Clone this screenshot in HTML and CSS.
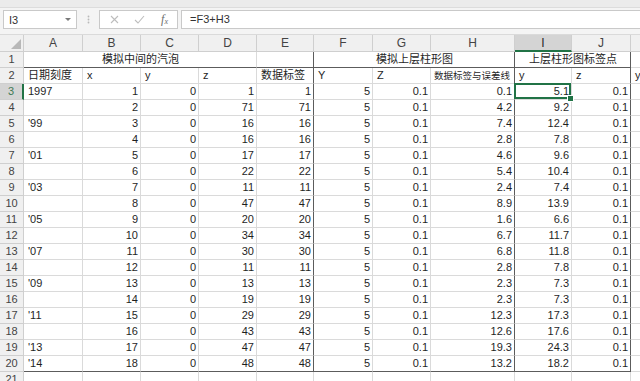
FILE: index.html
```html
<!DOCTYPE html>
<html lang="zh-CN">
<head>
    <meta charset="UTF-8">
    <meta name="viewport" content="width=device-width, initial-scale=1.0">
    <title>柱形图数据</title>
    <link rel="stylesheet" href="styles.css">
</head>
<body>

    <div class="ribbon"></div>
    <div class="formula-bar">
        <div class="name-box"><span>I3</span><span class="caret"></span></div>
        <div class="grip">
            <svg width="3" height="9" viewBox="0 0 3 9"><circle cx="1.5" cy="1.5" r="0.9" fill="#b9b9b9"/><circle cx="1.5" cy="4.5" r="0.9" fill="#b9b9b9"/><circle cx="1.5" cy="7.5" r="0.9" fill="#b9b9b9"/></svg>
        </div>
        <div class="fx-box">
            <span class="fx-btn">
                <svg width="9" height="9" viewBox="0 0 9 9"><path d="M1 1L8 8M8 1L1 8" stroke="#bdbdbd" stroke-width="1.1" fill="none"/></svg>
            </span>
            <span class="fx-btn">
                <svg width="11" height="9" viewBox="0 0 11 9"><path d="M1 5L4 8L10 1" stroke="#bdbdbd" stroke-width="1.1" fill="none"/></svg>
            </span>
            <span class="fx-btn fx-label"><i>f</i><span class="fx-x">x</span></span>
        </div>
        <div class="formula-input">=F3+H3</div>
    </div>

    <div class="sheet" id="sheet"></div>

    <script>
        const sheet = document.getElementById("sheet");
        // K is only a sliver at the right edge, its letter is off screen
        const letters = ["A", "B", "C", "D", "E", "F", "G", "H", "I", "J", ""];
        const years = ["1997", "", "'99", "", "'01", "", "'03", "", "'05", "", "'07", "", "'09", "", "'11", "", "'13", "'14"];
        const zVals = [1, 71, 16, 16, 17, 22, 11, 47, 20, 34, 30, 11, 13, 19, 29, 43, 47, 48];
        const hVals = [0.1, 4.2, 7.4, 2.8, 4.6, 5.4, 2.4, 8.9, 1.6, 6.7, 6.8, 2.8, 2.3, 2.3, 12.3, 12.6, 19.3, 13.2];
        // columns E, H, J carry the dark right border
        const edgeCols = [4, 7, 9];

        function addCell(text, cls) {
            const div = document.createElement("div");
            div.className = "cell " + (cls || "");
            div.textContent = text;
            sheet.appendChild(div);
            return div;
        }

        // column headers
        const corner = addCell("", "head corner");
        corner.innerHTML = '<svg width="10" height="10" viewBox="0 0 10 10"><path d="M10 0L10 10L0 10Z" fill="#b8b8b8"/></svg>';
        letters.forEach(function (l, c) {
            let cls = "head col-head";
            if (l === "I") cls += " sel-col";
            if (c === 10) cls += " last";
            addCell(l, cls);
        });

        // row 1: merged titles
        addCell("1", "head row-head");
        addCell("模拟中间的汽泡", "merged span4 edge-b");
        addCell("", "edge-b edge-r");
        addCell("模拟上层柱形图", "merged span3 edge-b edge-r");
        addCell("上层柱形图标签点", "merged span2 edge-b edge-r");
        addCell("", "last");

        // row 2: labels
        const labels = ["日期刻度", "x", "y", "z", "数据标签", "Y", "Z", "数据标签与误差线", "y", "z", "y"];
        addCell("2", "head row-head");
        labels.forEach(function (t, c) {
            let cls = edgeCols.includes(c) ? "edge-r" : "";
            if (c === 7) cls += " small";
            if (c === 10) cls += " last";
            addCell(t, cls);
        });

        // rows 3-20: data
        for (let i = 0; i < 18; i++) {
            addCell(String(i + 3), "head row-head" + (i === 0 ? " sel-row" : ""));
            const row = [years[i], i + 1, 0, zVals[i], zVals[i], 5, 0.1, hVals[i], (5 + hVals[i]).toFixed(1), 0.1, ""];
            row.forEach(function (v, c) {
                let cls = c === 0 ? "" : "num";
                if (edgeCols.includes(c)) cls += " edge-r";
                if (i === 17 && c < 10) cls += " edge-b";
                if (i === 0 && c === 8) cls += " active";
                if (c === 10) cls += " last";
                addCell(String(v), cls);
            });
        }

        // row 21
        addCell("21", "head row-head");
        letters.forEach(function (l, c) { addCell("", c === 10 ? "last" : ""); });
    </script>

</body>
</html>
```

FILE: styles.css
```css
body {
    margin: 0;
    width: 640px;
    height: 381px;
    overflow: hidden;
    background: #fff;
    color: #1f1f1f;
    font-family: "Liberation Sans", "Noto Sans CJK SC", sans-serif;
    font-size: 11px;
}
.ribbon {
    height: 7px;
    background: #ebebeb;
    border-bottom: 1px solid #dcdcdc;
}
.formula-bar {
    display: flex;
    align-items: center;
    padding: 2px 0 5px 3px;
    background: #f4f4f4;
    border-bottom: 1px solid #dadada;
}
.name-box {
    box-sizing: border-box;
    width: 74px;
    height: 19px;
    border: 1px solid #c9c9c9;
    background: #fff;
    display: flex;
    align-items: center;
    justify-content: space-between;
    padding: 0 5px 0 5px;
    color: #333;
}
.caret {
    width: 0;
    height: 0;
    border-left: 3px solid transparent;
    border-right: 3px solid transparent;
    border-top: 3px solid #7a7a7a;
}
.grip {
    width: 22px;
    display: flex;
    justify-content: center;
}
.fx-box {
    box-sizing: border-box;
    width: 79px;
    height: 19px;
    border: 1px solid #c9c9c9;
    background: #fff;
    display: flex;
    align-items: center;
    padding-left: 2px;
}
.fx-btn {
    width: 25px;
    display: flex;
    justify-content: center;
    align-items: center;
}
.fx-label {
    font-family: "Liberation Serif", serif;
    color: #6d6d6d;
    font-size: 12px;
}
.fx-x {
    font-size: 8px;
    font-style: italic;
    margin-top: 3px;
}
.formula-input {
    box-sizing: border-box;
    flex: 1;
    height: 19px;
    margin-left: 3px;
    border: 1px solid #c9c9c9;
    border-right: none;
    background: #fff;
    padding-left: 8px;
    line-height: 17px;
    color: #333;
}
.sheet {
    display: grid;
    grid-template-columns: 24px 59px 58px 58px 58px 57px 59px 58px 84px 57px 59px 9px;
    grid-template-rows: 17px;
    grid-auto-rows: 16px;
    width: 640px;
}
.cell {
    box-sizing: border-box;
    border-right: 1px solid #dadada;
    border-bottom: 1px solid #dadada;
    padding: 0 3px 0 4px;
    line-height: 15px;
    white-space: nowrap;
    overflow: hidden;
}
.cell.last {
    border-right: none;
    padding-right: 0;
}
.num {
    text-align: right;
    padding-right: 2px;
}
.head {
    background: #f0f0f0;
    color: #444;
    text-align: center;
    border-color: #cfcfcf;
    padding: 0;
}
.col-head {
    font-size: 12px;
    line-height: 16px;
}
.corner {
    display: flex;
    justify-content: flex-end;
    align-items: flex-end;
    padding: 0 2px 2px 0;
}
.sel-col {
    background: #d4d4d4;
    border-bottom: 2px solid #217346;
    color: #2a2a2a;
}
.sel-row {
    background: #d4d4d4;
    border-right: 2px solid #217346;
    color: #3f7a55;
}
.merged { text-align: center; }
.span2 { grid-column: span 2; }
.span3 { grid-column: span 3; }
.span4 { grid-column: span 4; }
.edge-r { border-right-color: #5c5c5c; }
.edge-b { border-bottom-color: #5c5c5c; }
.small { font-size: 9.5px; padding-left: 3px; }
.active {
    position: relative;
    overflow: visible;
}
.active::after {
    content: "";
    position: absolute;
    top: -1px;
    left: -1px;
    right: 0;
    bottom: 0;
    border: 2px solid #217346;
}
.active::before {
    content: "";
    position: absolute;
    right: -3px;
    bottom: -3px;
    width: 5px;
    height: 5px;
    background: #217346;
    border: 1px solid #fff;
    z-index: 1;
}
```
